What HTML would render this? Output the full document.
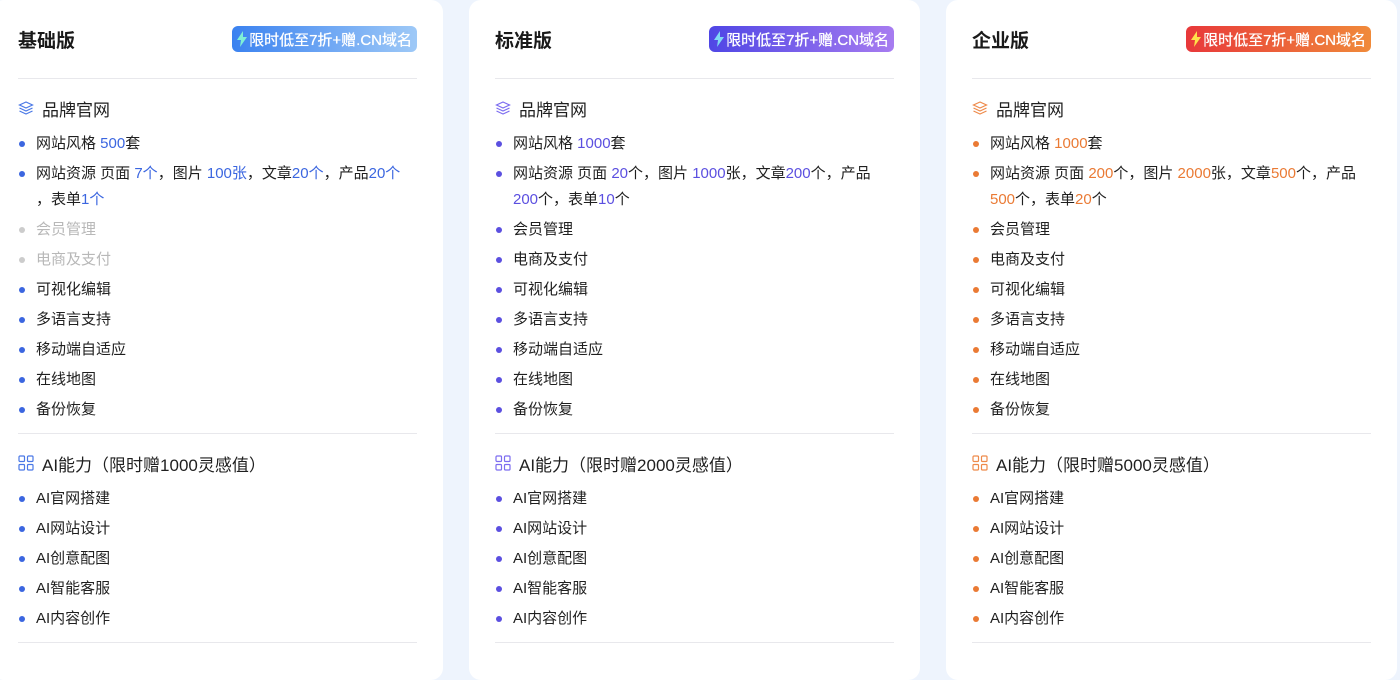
<!DOCTYPE html><html><head><meta charset="utf-8"><style>
*{margin:0;padding:0;box-sizing:border-box}
body{width:1400px;height:650px;overflow:hidden;background:#eef4fd;font-family:"Liberation Sans","Noto Sans CJK SC",sans-serif;color:#1f1f1f;position:relative}
.card{position:absolute;top:0;height:680px;background:#fff;border-radius:12px;padding:0 26px}
.hd{height:79px;border-bottom:1px solid #e8e8ec;display:flex;align-items:center;justify-content:space-between}
.hd h2{font-size:19px;font-weight:700;color:#1a1a1a}
.badge{height:26px;border-radius:6px;color:#fff;font-size:15px;padding:0 5px 0 4px;display:flex;align-items:center;gap:1px;text-shadow:0 0 0.4px #fff,0 0 0.4px #fff}
.sec{height:58px;display:flex;align-items:center;gap:8px;font-size:17px}
ul{list-style:none;font-size:15px;margin-top:-6px}
li{position:relative;padding-left:18px;line-height:26px;margin-bottom:4px}
li:before{content:"";position:absolute;left:1px;top:10px;width:6px;height:6px;border-radius:50%;background:var(--c)}
li.g{color:#b8b8b8}li.g:before{background:#ccc}
.n{color:var(--c)}
.div{border-top:1px solid #e8e8ec;margin-top:10px}
</style></head><body>
<div class="card" style="left:-8px;width:451px;--c:#3b66e0">
<div class="hd"><h2>基础版</h2><div class="badge" style="background:linear-gradient(90deg,#3b82f0,#9ec9f7)"><svg width="12" height="16" viewBox="0 0 12 16"><path d="M7 0L1 9h4l-1 7 7-10H7z" fill="#7ff0d6"/></svg>限时低至7折+赠.CN域名</div></div>
<div class="sec"><svg width="16" height="16" viewBox="0 0 16 16" fill="none" stroke="#4a78e6" stroke-width="1.2"><path d="M8 2L1.5 5 8 8l6.5-3z"/><path d="M1.5 8L8 11l6.5-3"/><path d="M1.5 11L8 14l6.5-3"/></svg>品牌官网</div>
<ul><li>网站风格 <span class="n">500</span>套</li><li>网站资源 页面 <span class="n">7个</span>，图片 <span class="n">100张</span>，文章<span class="n">20个</span>，产品<span class="n">20个</span><br>，表单<span class="n">1个</span></li><li class="g">会员管理</li><li class="g">电商及支付</li><li>可视化编辑</li><li>多语言支持</li><li>移动端自适应</li><li>在线地图</li><li>备份恢复</li></ul>
<div class="div"></div>
<div class="sec"><svg width="16" height="16" viewBox="0 0 16 16" fill="none" stroke="#4a78e6" stroke-width="1.2"><rect x="1" y="1" width="5.5" height="5.5" rx="1"/><rect x="9.5" y="1" width="5.5" height="5.5" rx="1"/><rect x="1" y="9.5" width="5.5" height="5.5" rx="1"/><rect x="9.5" y="9.5" width="5.5" height="5.5" rx="1"/></svg>AI能力（限时赠1000灵感值）</div>
<ul><li>AI官网搭建</li><li>AI网站设计</li><li>AI创意配图</li><li>AI智能客服</li><li>AI内容创作</li></ul>
<div class="div"></div>
</div>

<div class="card" style="left:469px;width:451px;--c:#5b4fe0">
<div class="hd"><h2>标准版</h2><div class="badge" style="background:linear-gradient(90deg,#4f46e5,#a77cf0)"><svg width="12" height="16" viewBox="0 0 12 16"><path d="M7 0L1 9h4l-1 7 7-10H7z" fill="#7fd8f5"/></svg>限时低至7折+赠.CN域名</div></div>
<div class="sec"><svg width="16" height="16" viewBox="0 0 16 16" fill="none" stroke="#7c6cf0" stroke-width="1.2"><path d="M8 2L1.5 5 8 8l6.5-3z"/><path d="M1.5 8L8 11l6.5-3"/><path d="M1.5 11L8 14l6.5-3"/></svg>品牌官网</div>
<ul><li>网站风格 <span class="n">1000</span>套</li><li>网站资源 页面 <span class="n">20</span>个，图片 <span class="n">1000</span>张，文章<span class="n">200</span>个，产品<br><span class="n">200</span>个，表单<span class="n">10</span>个</li><li>会员管理</li><li>电商及支付</li><li>可视化编辑</li><li>多语言支持</li><li>移动端自适应</li><li>在线地图</li><li>备份恢复</li></ul>
<div class="div"></div>
<div class="sec"><svg width="16" height="16" viewBox="0 0 16 16" fill="none" stroke="#7c6cf0" stroke-width="1.2"><rect x="1" y="1" width="5.5" height="5.5" rx="1"/><rect x="9.5" y="1" width="5.5" height="5.5" rx="1"/><rect x="1" y="9.5" width="5.5" height="5.5" rx="1"/><rect x="9.5" y="9.5" width="5.5" height="5.5" rx="1"/></svg>AI能力（限时赠2000灵感值）</div>
<ul><li>AI官网搭建</li><li>AI网站设计</li><li>AI创意配图</li><li>AI智能客服</li><li>AI内容创作</li></ul>
<div class="div"></div>
</div>

<div class="card" style="left:946px;width:451px;--c:#ea7a34">
<div class="hd"><h2>企业版</h2><div class="badge" style="background:linear-gradient(90deg,#e8383a,#f08a3a)"><svg width="12" height="16" viewBox="0 0 12 16"><path d="M7 0L1 9h4l-1 7 7-10H7z" fill="#ffe14a"/></svg>限时低至7折+赠.CN域名</div></div>
<div class="sec"><svg width="16" height="16" viewBox="0 0 16 16" fill="none" stroke="#ee8a4a" stroke-width="1.2"><path d="M8 2L1.5 5 8 8l6.5-3z"/><path d="M1.5 8L8 11l6.5-3"/><path d="M1.5 11L8 14l6.5-3"/></svg>品牌官网</div>
<ul><li>网站风格 <span class="n">1000</span>套</li><li>网站资源 页面 <span class="n">200</span>个，图片 <span class="n">2000</span>张，文章<span class="n">500</span>个，产品<br><span class="n">500</span>个，表单<span class="n">20</span>个</li><li>会员管理</li><li>电商及支付</li><li>可视化编辑</li><li>多语言支持</li><li>移动端自适应</li><li>在线地图</li><li>备份恢复</li></ul>
<div class="div"></div>
<div class="sec"><svg width="16" height="16" viewBox="0 0 16 16" fill="none" stroke="#ee8a4a" stroke-width="1.2"><rect x="1" y="1" width="5.5" height="5.5" rx="1"/><rect x="9.5" y="1" width="5.5" height="5.5" rx="1"/><rect x="1" y="9.5" width="5.5" height="5.5" rx="1"/><rect x="9.5" y="9.5" width="5.5" height="5.5" rx="1"/></svg>AI能力（限时赠5000灵感值）</div>
<ul><li>AI官网搭建</li><li>AI网站设计</li><li>AI创意配图</li><li>AI智能客服</li><li>AI内容创作</li></ul>
<div class="div"></div>
</div>
</body></html>
